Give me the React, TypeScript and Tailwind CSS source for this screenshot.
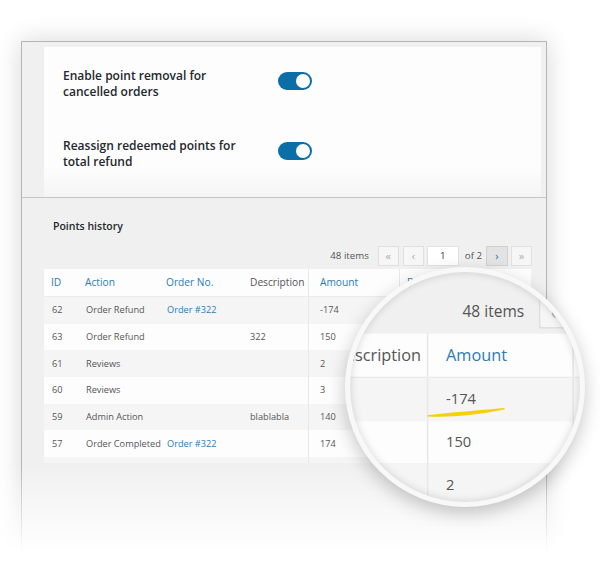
import React from "react"

const rows = [
  { id: "62", action: "Order Refund", order: "Order #322", desc: "", amount: "-174" },
  { id: "63", action: "Order Refund", order: "", desc: "322", amount: "150" },
  { id: "61", action: "Reviews", order: "", desc: "", amount: "2" },
  { id: "60", action: "Reviews", order: "", desc: "", amount: "3" },
  { id: "59", action: "Admin Action", order: "", desc: "blablabla", amount: "140" },
  { id: "57", action: "Order Completed", order: "Order #322", desc: "", amount: "174" },
  { id: "", action: "", order: "", desc: "", amount: "" },
]

const cols = "grid grid-cols-[34px_81px_84px_65px_91px_1fr]"

function Toggle() {
  return (
    <div className="mt-[4px] flex h-[18px] w-[34px] items-center justify-end rounded-full bg-[#0b6ea6] px-[2px]">
      <div className="h-[14px] w-[14px] rounded-full bg-white" />
    </div>
  )
}

function SettingRow({ first, second }: { first: string; second: string }) {
  return (
    <div className="flex items-start">
      <div className="w-[215px] text-[12px] font-semibold leading-[16px] text-[#23282d]">
        {first}
        <br />
        {second}
      </div>
      <Toggle />
    </div>
  )
}

function PageButton({ label, active }: { label: string; active?: boolean }) {
  return (
    <span
      className={
        active
          ? "flex h-[20px] w-[22px] items-center justify-center border border-[#d0d0d0] bg-[#e3e3e3] text-[11px] text-[#2271b1]"
          : "flex h-[20px] w-[21px] items-center justify-center border border-[#e0e0e0] bg-[#f6f6f6] text-[11px] text-[#a9acaf]"
      }
    >
      {label}
    </span>
  )
}

function Pager() {
  return (
    <div className="flex h-[20px] items-center justify-end whitespace-nowrap text-[9.7px] text-[#555]">
      <span className="mr-[9px]">48 items</span>
      <PageButton label="«" />
      <span className="ml-[4px]">
        <PageButton label="‹" />
      </span>
      <span className="ml-[3px] flex h-[20px] w-[32px] items-center justify-center border border-[#e2e2e2] bg-white text-[#32373c]">
        1
      </span>
      <span className="ml-[6px] mr-[4px]">of 2</span>
      <PageButton label="›" active />
      <span className="ml-[3px]">
        <PageButton label="»" />
      </span>
    </div>
  )
}

function HistoryTable() {
  return (
    <div className="h-[194px] w-[487px] overflow-hidden whitespace-nowrap">
      <div className={`${cols} h-[28px] items-center border-b border-[#ebebeb] bg-[#fdfdfd] text-[10.2px] text-[#2c7bb6]`}>
        <span className="pl-[7px]">ID</span>
        <span className="pl-[7px]">Action</span>
        <span className="pl-[7px]">Order No.</span>
        <span className="pl-[7px] text-[#555]">Description</span>
        <span className="flex h-full items-center border-l border-[#e8e8e8] pl-[11px]">Amount</span>
        <span className="flex h-full items-center border-l border-[#e8e8e8] pl-[7px]">Date</span>
      </div>
      {rows.map((r, i) => (
        <div
          key={i}
          className={`${cols} h-[26.67px] items-center text-[9.2px] text-[#555] ${i % 2 === 0 ? "bg-[#f5f5f5]" : "bg-[#fdfdfd]"}`}
        >
          <span className="pl-[8px]">{r.id}</span>
          <span className="pl-[8px]">{r.action}</span>
          <span className="pl-[8px] text-[#2c7bb6]">{r.order}</span>
          <span className="pl-[7px]">{r.desc}</span>
          <span className="flex h-full items-center border-l border-[#e8e8e8] pl-[11px]">{r.amount}</span>
          <span className="h-full border-l border-[#e8e8e8]" />
        </div>
      ))}
    </div>
  )
}

function Frame() {
  return (
    <div className="ml-[21px] mt-[41px] h-[514px] w-[526px] border border-[#b5b5b5] bg-[#f0f0f0] shadow-[0_0_24px_rgba(0,0,0,0.16)]">
      <div className="pl-[22px] pr-[5px] pt-[5px]">
        <div className="h-[150px] bg-gradient-to-b from-[#fdfdfd] from-80% to-[#f5f5f5] pl-[19px] pt-[21px]">
          <SettingRow first="Enable point removal for" second="cancelled orders" />
          <div className="mt-[38px]">
            <SettingRow first="Reassign redeemed points for" second="total refund" />
          </div>
        </div>
      </div>
      <div className="border-t border-[#c6c6c6] pl-[22px] pr-[14px] pt-[21px]">
        <div className="pl-[9px] text-[10.5px] font-semibold leading-[14px] text-[#23282d]">Points history</div>
        <div className="mt-[13px]">
          <Pager />
        </div>
        <div className="mt-[3px]">
          <HistoryTable />
        </div>
      </div>
    </div>
  )
}

export default function App() {
  return (
    <div className="relative h-[563px] w-[600px] overflow-hidden bg-white font-['Open_Sans','Noto_Sans',sans-serif]">
      <div className="pt-px" />
      <div className="-mt-px">
        <Frame />
      </div>
      <div className="absolute left-0 top-[463px] h-[100px] w-full bg-gradient-to-b from-white/0 to-white to-90%" />
      <div className="absolute left-[345px] top-[267px] z-10 h-[240px] w-[240px] overflow-hidden rounded-full border-[5px] border-[#f8f8f8] bg-[#f0f0f0] shadow-[0_6px_18px_rgba(0,0,0,0.22)]">
        <div className="absolute left-0 top-0 h-[563px] w-[600px] origin-top-left [transform:translate(-416px,-369px)_scale(1.6)]">
          <div className="pt-px" />
          <div className="-mt-px">
            <Frame />
          </div>
        </div>
        <svg className="absolute left-0 top-0" width="230" height="230" viewBox="0 0 230 230">
          <path
            d="M78 143.8 C 100 141, 130 139.2, 154 136.8 C 131 141.6, 101 144.8, 78 143.8 Z"
            fill="#f5d10a"
            stroke="#f5d10a"
            strokeWidth="1.4"
            strokeLinejoin="round"
          />
        </svg>
        <div className="pointer-events-none absolute inset-0 rounded-full shadow-[inset_0_0_8px_rgba(0,0,0,0.16)]" />
      </div>
    </div>
  )
}
